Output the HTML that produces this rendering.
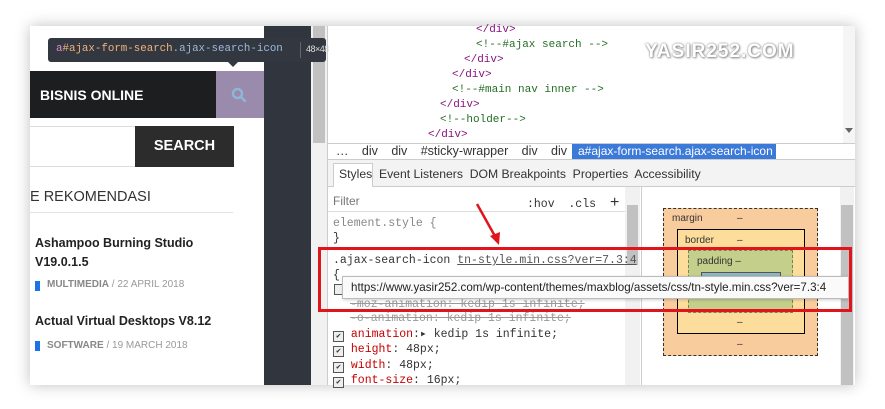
<!DOCTYPE html>
<html><head><meta charset="utf-8"><style>
*{margin:0;padding:0;box-sizing:border-box}
body{width:885px;height:409px;background:#fff;position:relative;overflow:hidden;font-family:"Liberation Sans",sans-serif}
.a{position:absolute}
.m{font-family:"Liberation Mono",monospace;font-size:11.5px;white-space:nowrap}
.s{font-family:"Liberation Sans",sans-serif;font-size:12px;white-space:nowrap;color:#333}
.tag{color:#881280}.cm{color:#236e25}
.cb{display:inline-block;width:11px;height:11px;border:1px solid #555;background:#eee;font-size:8px;line-height:9px;vertical-align:-1px;text-align:center}
</style></head><body>
<div class="a" style="left:30px;top:26px;width:825px;height:359px;background:#fff;box-shadow:0 0 14px rgba(0,0,0,.25)"></div>
<!-- left page -->
<div class="a" style="left:264px;top:26px;width:47px;height:359px;background:#31363e"></div>
<div class="a" style="left:311px;top:26px;width:17px;height:359px;background:#f1f1f1"></div>
<div class="a" style="left:313px;top:26px;width:12px;height:117px;background:#c1c1c1"></div>
<div class="a" style="left:30px;top:71px;width:186px;height:47px;background:#1c1e20"></div>
<div class="a" style="left:40px;top:87px;color:#fff;font-weight:bold;font-size:14px">BISNIS ONLINE</div>
<div class="a" style="left:216px;top:71px;width:48px;height:47px;background:#9a8aac"></div>
<svg class="a" style="left:231px;top:87px" width="16" height="16"><circle cx="6.5" cy="6.5" r="4.5" fill="none" stroke="#8fb6d8" stroke-width="2.4"/><path d="M10 10l4 4" stroke="#8fb6d8" stroke-width="2.6" stroke-linecap="round"/></svg>
<div class="a" style="left:30px;top:126px;width:105px;height:41px;border-top:1px solid #ddd;border-bottom:1px solid #ddd"></div>
<div class="a" style="left:135px;top:126px;width:99px;height:41px;background:#2c2c2c;color:#fff;font-weight:bold;font-size:14.5px;line-height:41px;text-align:center">SEARCH</div>
<div class="a" style="left:30px;top:189px;color:#333;font-size:14.5px">E REKOMENDASI</div>
<div class="a" style="left:30px;top:212px;width:203px;height:1px;background:#e3e3e3"></div>
<div class="a" style="left:35px;top:234px;color:#222;font-weight:bold;font-size:12.5px;line-height:19px">Ashampoo Burning Studio<br>V19.0.1.5</div>
<div class="a" style="left:35px;top:281px;width:5px;height:10px;background:#1a73e8"></div>
<div class="a" style="left:47px;top:279px;font-size:10px;color:#999"><b style="color:#888">MULTIMEDIA</b> / 22 APRIL 2018</div>
<div class="a" style="left:35px;top:314px;color:#222;font-weight:bold;font-size:12.5px">Actual Virtual Desktops V8.12</div>
<div class="a" style="left:35px;top:341px;width:5px;height:10px;background:#1a73e8"></div>
<div class="a" style="left:47px;top:340px;font-size:10px;color:#999"><b style="color:#888">SOFTWARE</b> / 19 MARCH 2018</div>
<!-- tooltip -->
<div class="a" style="left:48px;top:38px;width:278px;height:24px;background:#333740;border-radius:3px"></div>
<div class="a" style="left:227px;top:61px;width:0;height:0;border-left:6px solid transparent;border-right:6px solid transparent;border-top:6px solid #333740"></div>
<div class="a m" style="left:56px;top:43px;font-size:10.8px;color:#9bbbdc"><span style="color:#e18ad8">a</span><span style="color:#f0b37a">#ajax-form-search</span>.ajax-search-icon</div>
<div class="a" style="left:300px;top:42px;width:1px;height:16px;background:#666"></div>
<div class="a" style="left:306px;top:44px;width:18px;font-size:9px;color:#ddd;letter-spacing:-0.5px;white-space:nowrap">48×48</div>
<!-- devtools DOM -->
<div class="a" style="left:327px;top:26px;width:1px;height:359px;background:#ccc"></div>
<div class="a" style="left:843px;top:26px;width:12px;height:117px;background:#f5f5f5"></div>
<div class="a" style="left:845px;top:128px;width:0;height:0;border-left:4px solid transparent;border-right:4px solid transparent;border-top:5px solid #666"></div>
<div class="a m" style="left:476px;top:23px;line-height:15px;font-size:11px">
<div class="tag">&lt;/div&gt;</div>
<div class="cm">&lt;!--#ajax search --&gt;</div>
<div class="tag" style="margin-left:-12px">&lt;/div&gt;</div>
<div class="tag" style="margin-left:-24px">&lt;/div&gt;</div>
<div class="cm" style="margin-left:-24px">&lt;!--#main nav inner --&gt;</div>
<div class="tag" style="margin-left:-36px">&lt;/div&gt;</div>
<div class="cm" style="margin-left:-36px">&lt;!--holder--&gt;</div>
<div class="tag" style="margin-left:-48px">&lt;/div&gt;</div>
</div>
<div class="a" style="left:645px;top:41px;font-size:19px;font-weight:bold;color:#fff;letter-spacing:1px;text-shadow:0 0 2px #777,1px 1px 2px #999">YASIR252.COM</div>
<!-- breadcrumb -->
<div class="a" style="left:328px;top:143px;width:527px;height:17px;background:#fff;border-top:1px solid #ccc;border-bottom:1px solid #ccc"></div>
<div class="a s" style="left:336px;top:144px;line-height:15px;font-size:12.5px;word-spacing:1px">…&nbsp;&nbsp; div&nbsp;&nbsp; div&nbsp;&nbsp; #sticky-wrapper&nbsp;&nbsp; div&nbsp;&nbsp; div</div>
<div class="a s" style="left:572px;top:144px;width:204px;height:15px;background:#3b7ad9;color:#fff;line-height:15px;padding-left:6px">a#ajax-form-search.ajax-search-icon</div>
<!-- tabs -->
<div class="a" style="left:328px;top:160px;width:527px;height:27px;background:#f3f3f3;border-bottom:1px solid #ccc"></div>
<div class="a" style="left:333px;top:163px;width:40px;height:24px;background:#fff;border:1px solid #ccc;border-bottom:none"></div>
<div class="a s" style="left:339px;top:167px;font-size:12.2px">Styles&nbsp; Event Listeners&nbsp; DOM Breakpoints&nbsp; Properties&nbsp; Accessibility</div>
<!-- styles pane -->
<div class="a" style="left:328px;top:187px;width:297px;height:25px;border-bottom:1px solid #ddd"></div>
<div class="a s" style="left:333px;top:194px;color:#777">Filter</div>
<div class="a m" style="left:527px;top:194px;color:#333">:hov&nbsp; .cls&nbsp; <span style="font-size:16px">+</span></div>
<div class="a" style="left:625px;top:187px;width:15px;height:198px;background:#f1f1f1"></div>
<div class="a" style="left:627px;top:205px;width:11px;height:60px;background:#c1c1c1"></div>
<div class="a" style="left:641px;top:187px;width:1px;height:198px;background:#ccc"></div>
<div class="a" style="left:840px;top:187px;width:14px;height:198px;background:#f1f1f1"></div>
<div class="a" style="left:841px;top:205px;width:12px;height:180px;background:#c1c1c1"></div>
<div class="a m" style="left:333px;top:217px;line-height:14.5px;color:#333">
<div style="color:#888">element.style {</div>
<div>}</div>
<div style="margin-top:8px">.ajax-search-icon <u style="color:#555">tn-style.min.css?ver=7.3:4</u></div>
<div>{</div>
<div>&nbsp;</div>
<div style="color:#999;text-decoration:line-through;margin-left:17px">-moz-animation: kedip 1s infinite;</div>
<div style="color:#999;text-decoration:line-through;margin-left:17px">-o-animation: kedip 1s infinite;</div>
<div style="margin-top:1px"><span class="cb">✔</span> <span style="color:#c80000">animation</span>:▸ kedip 1s infinite;</div>
<div style="margin-top:1px"><span class="cb">✔</span> <span style="color:#c80000">height</span>: 48px;</div>
<div style="margin-top:1px"><span class="cb">✔</span> <span style="color:#c80000">width</span>: 48px;</div>
<div style="margin-top:1px"><span class="cb">✔</span> <span style="color:#c80000">font-size</span>: 16px;</div>
</div>
<div class="a" style="left:334px;top:284px;width:11px;height:11px;border:1px solid #555;background:#eee"></div>
<!-- box model -->
<div class="a" style="left:663px;top:208px;width:155px;height:148px;background:#f9cc9d;border:1px dashed #333"></div>
<div class="a s" style="left:672px;top:213px;font-size:10px">margin</div><div class="a s" style="left:737px;top:213px;font-size:10px">–</div>
<div class="a" style="left:677px;top:229px;width:128px;height:105px;background:#fddd9b;border:1px solid #000"></div>
<div class="a s" style="left:685px;top:235px;font-size:10px">border</div><div class="a s" style="left:737px;top:235px;font-size:10px">–</div>
<div class="a" style="left:688px;top:250px;width:105px;height:63px;background:#c3cf8a;border:1px dashed #808050"></div>
<div class="a s" style="left:697px;top:256px;font-size:10px">padding –</div>
<div class="a" style="left:701px;top:272px;width:80px;height:20px;background:#8cb6c0;border:1px solid #555"></div>
<div class="a s" style="left:737px;top:317px;font-size:10px">–</div>
<div class="a s" style="left:737px;top:339px;font-size:10px">–</div>
<!-- url tooltip & red box -->
<div class="a" style="left:342px;top:276px;width:507px;height:23px;background:#fafafa;border:1px solid #bbb;box-shadow:1px 1px 3px rgba(0,0,0,.2)"></div>
<div class="a s" style="left:351px;top:281px;font-size:11.6px;color:#222">https://www.yasir252.com/wp-content/themes/maxblog/assets/css/tn-style.min.css?ver=7.3:4</div>
<div class="a" style="left:318px;top:247px;width:534px;height:65px;border:3px solid #e0141a"></div>
<svg class="a" style="left:470px;top:200px" width="40" height="50"><path d="M7 4L26 38" stroke="#e0141a" stroke-width="2.5"/><path d="M20 36L29 45L30 32Z" fill="#e0141a"/></svg>
</body></html>
